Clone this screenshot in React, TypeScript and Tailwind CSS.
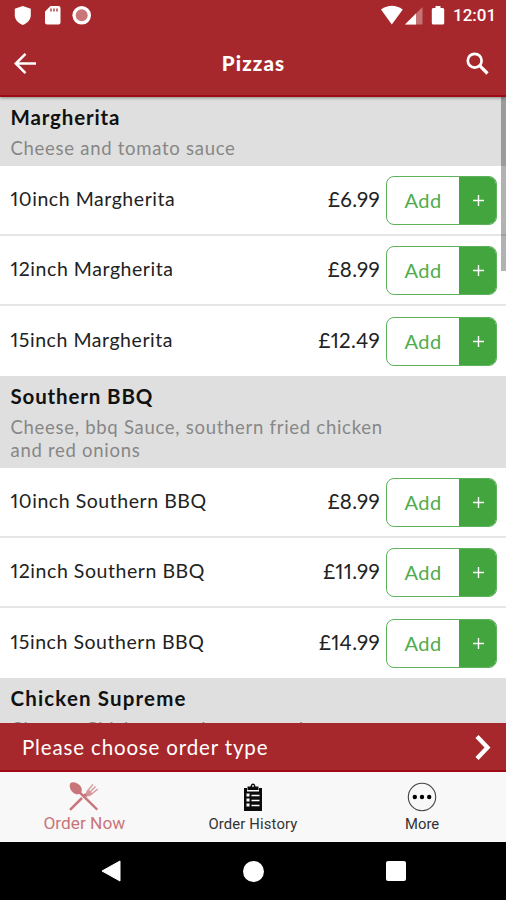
import clsx from 'clsx';

interface MenuItem {
  name: string;
  price: string;
}

interface MenuSection {
  title: string;
  titleClass: string;
  description: string;
  height: string;
  items: MenuItem[];
}

const sections: MenuSection[] = [
  {
    title: 'Margherita',
    titleClass: 'tracking-[0.85px]',
    description: 'Cheese and tomato sauce',
    height: 'h-[69px]',
    items: [
      { name: '10inch Margherita', price: '£6.99' },
      { name: '12inch Margherita', price: '£8.99' },
      { name: '15inch Margherita', price: '£12.49' },
    ],
  },
  {
    title: 'Southern BBQ',
    titleClass: 'tracking-[0.85px]',
    description: 'Cheese, bbq Sauce, southern fried chicken and red onions',
    height: 'h-[92px]',
    items: [
      { name: '10inch Southern BBQ', price: '£8.99' },
      { name: '12inch Southern BBQ', price: '£11.99' },
      { name: '15inch Southern BBQ', price: '£14.99' },
    ],
  },
  {
    title: 'Chicken Supreme',
    titleClass: 'tracking-[1.15px]',
    description: 'Cheese, Chicken, mushrooms and sweetcorn',
    height: 'h-[92px]',
    items: [],
  },
];

function StatusBar() {
  return (
    <div className="flex h-[31px] items-center justify-between pl-3 pr-[10px] text-white">
      <svg className="h-[31px] w-[90px]" viewBox="12 0 90 31" fill="currentColor">
        <path d="M22.800 6l8 2.800v6.400c0 4.400-3.300 7.800-8 9.800-4.700-2-8-5.400-8-9.800V8.800z" />
        <path d="M50.500 6h8q2 0 2 2v14.500q0 2-2 2H47q-2 0-2-2V11.500z" />
        <path d="M51 8.500v3M54 8.500v3M57 8.500v3" stroke="#a7282c" strokeWidth="1.300" />
        <circle cx="81.700" cy="15.300" r="9.300" />
        <circle cx="81.700" cy="15.300" r="6" fill="#c9767a" />
      </svg>
      <div className="flex items-center">
        <svg className="h-[31px] w-[70px]" viewBox="380 0 70 31" fill="currentColor">
          <path d="M381 9.500Q391.800 2 402.800 9.500L391.800 24.500z" />
          <path d="M422.500 7v17.500H405z" opacity=".35" />
          <path d="M416 13.500v11h-11z" />
          <path d="M435.500 6h5v2h2.200q1.500 0 1.500 1.500V23q0 1.500-1.500 1.500h-9.400q-1.500 0-1.500-1.500V9.500q0-1.500 1.500-1.500h2.200z" />
        </svg>
        <span className="w-[46px] whitespace-nowrap pl-[3px] font-[Roboto] text-[17px] font-medium">12:01</span>
      </div>
    </div>
  );
}

function Header() {
  return (
    <header className="z-10 shrink-0 border-b-2 border-[#9c0c12] bg-[#a7282c] text-white shadow-[0_1px_3px_rgba(0,0,0,0.4)]">
      <StatusBar />
      <div className="flex h-[64px] items-center justify-between pl-[14px] pr-[17px]">
        <svg className="size-[23px]" viewBox="0 0 23 23" fill="none" stroke="currentColor" strokeWidth="2.500">
          <path d="M22 11.500H2M11.500 1.800L1.800 11.500l9.700 9.700" />
        </svg>
        <h1 className="pl-1 text-[20.500px] font-black tracking-[1.1px]">Pizzas</h1>
        <svg className="size-[23px]" viewBox="0 0 23 23" fill="none" stroke="currentColor" strokeWidth="2.700">
          <circle cx="8.700" cy="8.700" r="6.900" />
          <path d="M13.700 13.700l7.800 7.800" strokeWidth="3.200" />
        </svg>
      </div>
    </header>
  );
}

function AddButton() {
  return (
    <button className="flex h-[49px] w-[111px] overflow-hidden rounded-[8px] border border-[#5eb25c] text-[20px]">
      <span className="flex flex-1 items-center justify-center pb-[2px] tracking-[0.5px] text-[#4fac4d]">Add</span>
      <span className="flex w-[37px] items-center justify-center bg-[#43a53e] pl-px text-white">
        <svg className="size-[11px]" viewBox="0 0 11 11" stroke="currentColor" strokeWidth="1.400">
          <path d="M5.500 0v11M0 5.500h11" />
        </svg>
      </span>
    </button>
  );
}

function Section({ section }: { section: MenuSection }) {
  return (
    <section>
      <div className={clsx('bg-[#dfdfdf] pl-[10.500px] pt-[8px]', section.height)}>
        <h2 className={clsx('text-[20.500px] font-bold leading-6 text-[#111]', section.titleClass)}>{section.title}</h2>
        <p className="mt-[8px] w-[390px] text-[18.500px] leading-[23px] tracking-[0.72px] text-[#878787]">
          {section.description}
        </p>
      </div>
      {section.items.map((item, idx) => (
        <div
          key={item.name}
          className={clsx(
            'flex h-[70px] items-center pl-[10.500px] pr-[9px] pt-px proportional-nums',
            idx < section.items.length - 1 && 'border-b-2 border-[#e6e6e6]'
          )}
        >
          <span className="flex-1 pb-[4px] text-[19.500px] tracking-[0.55px] text-[#222]">{item.name}</span>
          <span className="mr-[6px] pb-[2px] text-[20.500px] tracking-[0.3px] text-[#222]">{item.price}</span>
          <AddButton />
        </div>
      ))}
    </section>
  );
}

function TabBar() {
  return (
    <nav className="grid h-[70px] shrink-0 grid-cols-3 bg-[#f8f8f8] font-[Roboto] text-[14.800px] text-[#333]">
      <div className="flex flex-col items-center pt-[9px] text-[#c8757a]">
        <svg className="h-[30px] w-[30px]" viewBox="0 0 30 30" fill="currentColor">
          <path d="M1.500 2C4 .2 8.500 1.500 11 4.500c2 2.500 2.300 5 1.300 6.700L29 27.800 27.500 29.500 10.500 13C8 14 5 12.800 3 10.500.7 8 0 4 1.500 2z" />
          <path d="M17 13l-3 3M13 17L1 28.800" stroke="currentColor" strokeWidth="2.500" />
          <path d="M16 15c1-1 .5-3 1.500-5l6-7 1 .8-4.500 5.400 1 .9 5-5 1 .9-5 5 .9 1 5.400-4.500.8 1-6.500 5.500c-2 1.500-4 1-5.300 2.300z" opacity=".75" />
        </svg>
        <span className="pt-px text-[17.300px] leading-[22px]">Order Now</span>
      </div>
      <div className="flex flex-col items-center pt-[11px]">
        <svg className="h-[29px] w-[20px]" viewBox="0 0 20 29">
          <path d="M1 5h18v23H1z" fill="#0b0b0b" />
          <path d="M4 4.500h12v4H4z" fill="#f8f8f8" />
          <path d="M4.500 3.500H7.500Q8 .5 10 .5t2.500 3h3V7h-11z" fill="#0b0b0b" />
          <circle cx="10" cy="3" r=".9" fill="#f8f8f8" />
          <path d="M3.500 12h3M3.500 17h3M3.500 22h3" stroke="#fff" strokeWidth="2.800" />
          <path d="M8.500 12.500h8M8.500 17.500h8M8.500 22.500h8" stroke="#fff" strokeWidth="1.300" />
        </svg>
        <span className="pt-[2px] leading-[20px] tracking-[0.15px]">Order History</span>
      </div>
      <div className="flex flex-col items-center pl-px pt-[10px]">
        <svg className="size-[30px]" viewBox="0 0 30 30">
          <circle cx="15" cy="15" r="13.700" fill="none" stroke="#444" strokeWidth="1.100" />
          <circle cx="7.800" cy="15" r="2.200" />
          <circle cx="15" cy="15" r="2.200" />
          <circle cx="22.200" cy="15" r="2.200" />
        </svg>
        <span className="pt-[2px] leading-[20px]">More</span>
      </div>
    </nav>
  );
}

export default function App() {
  return (
    <div className="flex h-[900px] w-[506px] flex-col overflow-hidden bg-white font-[Lato,sans-serif]">
      <Header />
      <main className="relative min-h-0 flex-1 overflow-hidden">
        {sections.map((section) => (
          <Section key={section.title} section={section} />
        ))}
        <div className="absolute right-0 top-0 h-[174px] w-[5px] bg-black/30" />
      </main>
      <div className="flex h-[49px] shrink-0 items-center justify-between border-b-2 border-[#9c0c12] bg-[#a7282c] pl-[22px] pr-[14px] text-white">
        <span className="pt-[2px] text-[20.500px] tracking-[0.85px]">Please choose order type</span>
        <svg className="h-[27px] w-[18px]" viewBox="0 0 18 27" fill="none" stroke="currentColor" strokeWidth="4.300">
          <path d="M3 3.500l10.500 11L3 25.500" />
        </svg>
      </div>
      <TabBar />
      <div className="grid h-[58px] shrink-0 grid-cols-[1fr_62px_1fr] items-center bg-black text-white">
        <svg className="ml-[101px] h-[22px] w-[20px]" viewBox="0 0 20 22" fill="currentColor">
          <path d="M19 1v20L1 11z" stroke="currentColor" strokeLinejoin="round" />
        </svg>
        <div className="size-[21px] justify-self-center rounded-full bg-white" />
        <div className="ml-[102px] size-[20px] rounded-[2px] bg-white" />
      </div>
    </div>
  );
}
